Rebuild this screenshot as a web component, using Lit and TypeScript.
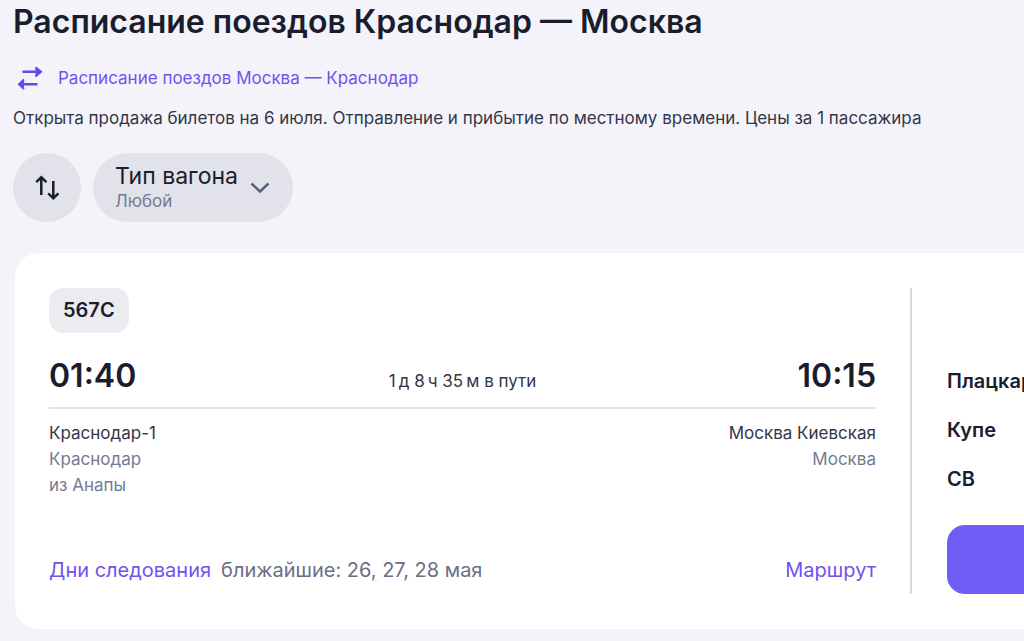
import { LitElement, html, css } from "lit";
import { customElement, state } from "lit/decorators.js";

interface Stop {
  time: string;
  station: string;
  city: string;
  note?: string;
}

interface Train {
  number: string;
  duration: string;
  from: Stop;
  to: Stop;
  nearest: string;
  fares: string[];
}

const TRAINS: Train[] = [
  {
    number: "567С",
    duration: "1\u2009д 8\u2009ч 35\u2009м в пути",
    from: { time: "01:40", station: "Краснодар-1", city: "Краснодар", note: "из Анапы" },
    to: { time: "10:15", station: "Москва Киевская", city: "Москва" },
    nearest: "ближайшие: 26, 27, 28 мая",
    fares: ["Плацкарт", "Купе", "СВ"],
  },
];

@customElement("train-card")
class TrainCard extends LitElement {
  static properties = { train: { attribute: false } };
  declare train: Train;

  static styles = css`
    :host { display: block; }
    * { box-sizing: border-box; margin: 0; }
    .card {
      display: flex;
      background: #fff;
      border-radius: 24px 0 0 24px;
      padding: 35px 0 35px 34px;
      overflow: hidden;
    }
    .trip { flex: 1; min-width: 0; display: flex; flex-direction: column; padding-right: 34px; }
    .number {
      align-self: flex-start;
      background: #ecebf0;
      border-radius: 14px;
      padding: 10px 14px;
      font-size: 20px;
      line-height: 25px;
      font-weight: 600;
    }
    .times {
      display: grid;
      grid-template-columns: 1fr auto 1fr;
      align-items: baseline;
      margin-top: 22px;
      padding-bottom: 10px;
      border-bottom: 2px solid #e3e2ee;
    }
    .time { font-size: 32px; line-height: 42px; font-weight: 600; }
    .arrival { text-align: right; }
    .duration { font-size: 17px; line-height: 24px; color: #323648; }
    .stops { display: flex; justify-content: space-between; margin-top: 11px; }
    .stop { font-size: 17px; line-height: 26px; color: #757a92; }
    .stop.end { text-align: right; }
    .station { color: #323648; }
    .foot {
      display: flex;
      align-items: baseline;
      gap: 10px;
      margin-top: auto;
      padding-bottom: 11px;
      font-size: 20px;
      line-height: 26px;
      color: #6a6f86;
    }
    .foot a { color: #6f52f0; text-decoration: none; }
    .foot .route { margin-left: auto; }
    .fares {
      width: 114px;
      height: 306px;
      border-left: 2px solid #d8d7e6;
      padding-left: 35px;
      display: flex;
      flex-direction: column;
      justify-content: flex-end;
      white-space: nowrap;
      overflow: hidden;
    }
    .list { list-style: none; padding: 0 0 33px; display: flex; flex-direction: column; gap: 23px; }
    .list li { font-size: 20px; line-height: 26px; font-weight: 600; }
    .buy {
      height: 69px;
      width: 100%;
      border: 0;
      border-radius: 18px 0 0 18px;
      background: #705df6;
      cursor: pointer;
    }
  `;

  render() {
    const t = this.train;
    return html`
      <article class="card">
        <div class="trip">
          <span class="number">${t.number}</span>
          <div class="times">
            <time class="time">${t.from.time}</time>
            <span class="duration">${t.duration}</span>
            <time class="time arrival">${t.to.time}</time>
          </div>
          <div class="stops">
            <div class="stop">
              <p class="station">${t.from.station}</p>
              <p>${t.from.city}</p>
              <p>${t.from.note}</p>
            </div>
            <div class="stop end">
              <p class="station">${t.to.station}</p>
              <p>${t.to.city}</p>
            </div>
          </div>
          <div class="foot">
            <a href="#days">Дни следования</a>
            <span>${t.nearest}</span>
            <a class="route" href="#route">Маршрут</a>
          </div>
        </div>
        <div class="fares">
          <ul class="list">${t.fares.map((f) => html`<li>${f}</li>`)}</ul>
          <button class="buy" type="button" aria-label="Выбрать места"></button>
        </div>
      </article>
    `;
  }
}

@customElement("app-root")
class AppRoot extends LitElement {
  @state() private reversed = false;

  static styles = css`
    :host {
      display: block;
      min-height: 100vh;
      background: #f4f3f9;
      color: #1a1d2e;
      font-family: Inter, "Open Sans", sans-serif;
      overflow: hidden;
    }
    * { box-sizing: border-box; margin: 0; }
    .page { padding: 2px 0 13px 13px; }
    h1 { font-size: 32px; line-height: 40px; font-weight: 600; }
    .reverse {
      display: flex;
      align-items: center;
      gap: 12px;
      margin-top: 22px;
      padding-left: 3px;
      font-size: 17px;
      line-height: 28px;
      color: #6f52f0;
      text-decoration: none;
    }
    .note { margin-top: 13px; font-size: 17px; line-height: 26px; color: #323648; }
    .filters { display: flex; gap: 12px; margin-top: 22px; }
    .filters button {
      border: 0;
      background: #e2e2ea;
      height: 69px;
      border-radius: 35px;
      font: inherit;
      color: inherit;
      cursor: pointer;
    }
    .sort { width: 68px; padding: 0; display: grid; place-items: center; }
    .filters .type { display: flex; align-items: center; gap: 11px; padding: 0 22px; text-align: left; }
    .label { padding-bottom: 2px; }
    .name { display: block; font-size: 23px; line-height: 28px; }
    .value { display: block; font-size: 17px; line-height: 22px; color: #757a92; }
    svg { display: block; flex: none; }
    .trains { margin: 31px 0 0 2px; }
  `;

  render() {
    return html`
      <main class="page">
        <h1>Расписание поездов Краснодар — Москва</h1>
        <a class="reverse" href="#reverse">
          <svg width="30" height="28" viewBox="0 0 30 28" fill="none" stroke="#6548ea" stroke-width="2.4">
            <path d="M6.500 7.700H22.500M21.500 20.200H5.500" />
            <path d="M19.500 3.200 25 7.700 19.500 12.400" stroke-width="2" fill="#6548ea" />
            <path d="M8 15.500 3 20.200 8 24.900" stroke-width="2" fill="#6548ea" />
          </svg>
          <span>Расписание поездов Москва — Краснодар</span>
        </a>
        <p class="note">
          Открыта продажа билетов на 6 июля. Отправление и прибытие по местному времени. Цены за 1 пассажира
        </p>
        <div class="filters">
          <button class="sort" type="button" aria-label="Сортировка" @click=${() => (this.reversed = !this.reversed)}>
            <svg width="28" height="28" viewBox="0 0 28 28" fill="none" stroke="#1a1d2e" stroke-width="2.5">
              <path d="M8.300 21V3.500M3.200 8.200 8.300 3.200 13.400 8.200M20.300 7V24M15.200 19.300 20.300 24.300 25.400 19.300" />
            </svg>
          </button>
          <button class="type" type="button">
            <span class="label"><span class="name">Тип вагона</span><span class="value">Любой</span></span>
            <svg width="22" height="20" viewBox="0 0 22 20" fill="none" stroke="#5b5f7c" stroke-width="2.5">
              <path d="M2.500 5.500 11 13.500 19.500 5.500" />
            </svg>
          </button>
        </div>
        <section class="trains">${TRAINS.map((t) => html`<train-card .train=${t}></train-card>`)}</section>
      </main>
    `;
  }
}
